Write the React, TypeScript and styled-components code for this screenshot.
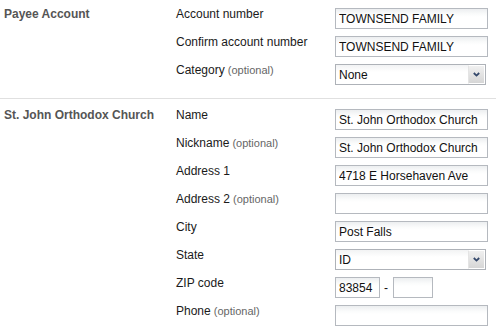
import styled, { createGlobalStyle } from 'styled-components';

const GlobalStyle = createGlobalStyle`
  html, body {
    margin: 0;
    padding: 0;
    background: #fff;
  }
  body {
    font-family: "Liberation Sans", Arial, sans-serif;
    color: #222;
  }
`;

interface Field {
  label: string,
  optional?: boolean,
  kind: 'text' | 'select' | 'zip',
  value?: string,
  zipExt?: string,
}

interface SectionData {
  title: string,
  fields: Field[],
}

const sections: SectionData[] = [
  {
    title: 'Payee Account',
    fields: [
      { label: 'Account number', kind: 'text', value: 'TOWNSEND FAMILY' },
      { label: 'Confirm account number', kind: 'text', value: 'TOWNSEND FAMILY' },
      { label: 'Category', optional: true, kind: 'select', value: 'None' },
    ],
  },
  {
    title: 'St. John Orthodox Church',
    fields: [
      { label: 'Name', kind: 'text', value: 'St. John Orthodox Church' },
      { label: 'Nickname', optional: true, kind: 'text', value: 'St. John Orthodox Church' },
      { label: 'Address 1', kind: 'text', value: '4718 E Horsehaven Ave' },
      { label: 'Address 2', optional: true, kind: 'text', value: '' },
      { label: 'City', kind: 'text', value: 'Post Falls' },
      { label: 'State', kind: 'select', value: 'ID' },
      { label: 'ZIP code', kind: 'zip', value: '83854', zipExt: '' },
      { label: 'Phone', optional: true, kind: 'text', value: '' },
    ],
  },
];

const ChevronDown = () => (
  <svg width="7" height="5" viewBox="0 0 7 5">
    <polyline points="0.8,1 3.5,3.6 6.2,1" fill="none" stroke="#34486b" strokeWidth="1.8" />
  </svg>
);

function FieldControl({ field }: { field: Field }) {
  if (field.kind === 'select') {
    return (
      <SelectBox>
        <span className='select-value'>{field.value}</span>
        <DropButton><ChevronDown /></DropButton>
      </SelectBox>
    );
  }

  if (field.kind === 'zip') {
    return (
      <ZipWrap>
        <TextBox $width={45} readOnly value={field.value} />
        <span className='dash'>-</span>
        <TextBox $width={40} readOnly value={field.zipExt} />
      </ZipWrap>
    );
  }

  return <TextBox $width={153} readOnly value={field.value} />;
}

function App() {
  return (
    <Page>
      <GlobalStyle />
      {
        sections.map(section => (
          <Section key={section.title}>
            <SectionTitle>{section.title}</SectionTitle>
            <Fields>
              {
                section.fields.map(field => (
                  <Row key={field.label}>
                    <FieldLabel>
                      {field.label}
                      {field.optional && <Optional> (optional)</Optional>}
                    </FieldLabel>
                    <FieldControl field={field} />
                  </Row>
                ))
              }
            </Fields>
          </Section>
        ))
      }
    </Page>
  );
}

export default App;

const Page = styled.div`
  width: 496px;
  height: 334px;
  overflow: hidden;
`;

const Section = styled.div`
  display: flex;
  align-items: flex-start;
  padding: 10px 0 13px 4px;
  border-bottom: 1px solid #e0e0e0;

  &:first-child {
    padding-top: 8px;
  }
`;

const SectionTitle = styled.div`
  width: 172px;
  flex: none;
  font-size: 12px;
  font-weight: bold;
  line-height: 12px;
  color: #555;
`;

const Fields = styled.div`
  display: flex;
  flex-direction: column;
  gap: 7px;
`;

const Row = styled.div`
  display: flex;
  align-items: flex-start;
  height: 21px;
`;

const FieldLabel = styled.div`
  width: 159px;
  flex: none;
  font-size: 12px;
  line-height: 12px;
  color: #1a1a1a;
`;

const Optional = styled.span`
  font-size: 11px;
  color: #666;
`;

const TextBox = styled.input<{ $width: number }>`
  box-sizing: border-box;
  width: ${p => p.$width}px;
  height: 21px;
  margin: 0;
  padding: 1px 3px 0;
  border: 1px solid #b5b9bf;
  border-radius: 0;
  background: linear-gradient(#eceef0 0, #fafbfb 5px, #fff 8px);
  font-family: "Liberation Sans", Arial, sans-serif;
  font-size: 12px;
  color: #111;
  outline: none;
`;

const SelectBox = styled.div`
  box-sizing: border-box;
  width: 151px;
  height: 21px;
  display: flex;
  align-items: stretch;
  border: 1px solid #aeb2b8;
  background: linear-gradient(#f2f3f4 0, #fff 7px);

  .select-value {
    flex: 1;
    padding: 1px 3px 0;
    font-size: 12px;
    line-height: 19px;
    color: #111;
  }
`;

const DropButton = styled.div`
  box-sizing: border-box;
  width: 17px;
  display: flex;
  align-items: center;
  justify-content: center;
  border: 1px solid #fff;
  border-left-color: #e4e4e4;
  background: linear-gradient(#f0f0f0, #d6d6d6);
`;

const ZipWrap = styled.div`
  display: flex;
  align-items: center;

  .dash {
    margin: 0 4px;
    width: 5px;
    font-size: 12px;
    color: #111;
  }
`;
